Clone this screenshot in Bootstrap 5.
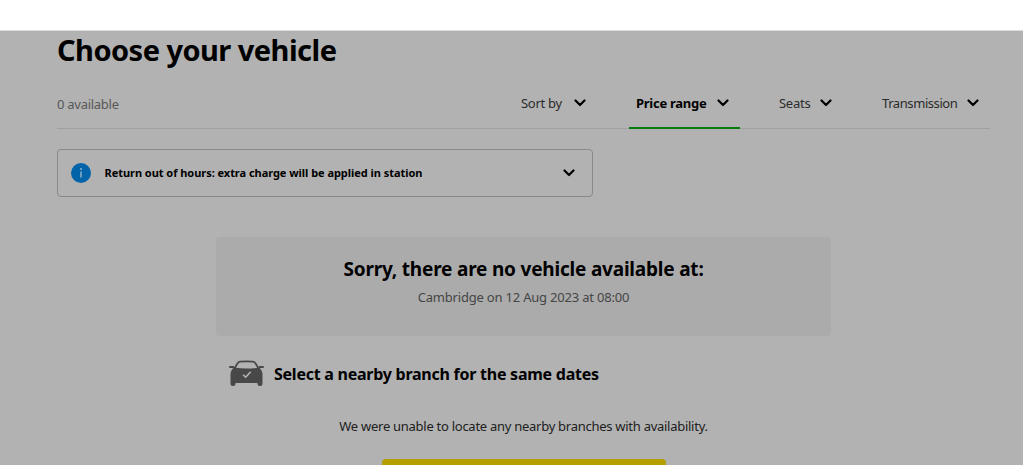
<!DOCTYPE html>
<html lang="en">
<head>
<meta charset="utf-8">
<meta name="viewport" content="width=device-width, initial-scale=1">
<title>Choose your vehicle</title>
<link href="https://cdn.jsdelivr.net/npm/bootstrap@5.3.0/dist/css/bootstrap.min.css" rel="stylesheet">
<style>
html{overflow:hidden}
body{background:#b2b2b2;color:#000;font-family:"Noto Sans","Open Sans",sans-serif;font-size:13px;line-height:20px;height:465px;overflow:hidden;letter-spacing:-.27px}
.topbar{height:31px;border-bottom:1px solid #dadcdc}
.page{margin-left:57px;width:933px;height:434px;overflow:hidden}
h1{font-size:29px;line-height:38px;letter-spacing:-.53px}
.filters{height:50px;margin-top:10px;border-bottom:1px solid #a0a0a0}
.count{color:#585858;padding-top:15px}
.filter{height:50px;color:#2b2b2b;border-bottom:2px solid transparent;padding:14px 8px 0 7px;display:flex;justify-content:space-between}
.filter svg{margin-top:6px}
.filter.active{color:#000;font-weight:700;border-color:#067a10;padding-right:11px}
.notice{width:536px;height:48px;margin-top:20px;border:1px solid #898989;border-radius:4px;padding:0 17px 0 13px;font-size:11px;font-weight:700;letter-spacing:-.04px}
.empty{width:615px;height:99px;margin:40px 0 0 159px;background:#ababab;border-radius:4px;padding-top:20px;letter-spacing:-.2px}
.empty h2{font-size:19px;line-height:25px}
.empty p{color:#454545;margin-top:5px}
.nearby{margin:24px 0 0 171px;height:28px}
.nearby h3{font-size:16px;line-height:28px;letter-spacing:-.25px}
.none{width:615px;margin:28px 0 0 159px;color:#202020}
.cta{display:block;width:284px;height:48px;margin:23px 0 0 325px;background:#b59e00;border-radius:4px}
</style>
<script src="https://cdn.jsdelivr.net/npm/bootstrap@5.3.0/dist/js/bootstrap.bundle.min.js"></script>
</head>
<body>
<svg class="d-none"><symbol id="chev" viewBox="0 0 12 8"><path d="M1.500 1.500 6 6l4.500-4.500" fill="none" stroke="#000" stroke-width="2.200" stroke-linecap="round" stroke-linejoin="round"/></symbol></svg>
<header class="topbar bg-white"></header>
<main class="page">
<h1 class="fw-bold mb-0">Choose your vehicle</h1>
<div class="filters d-flex">
<div class="count me-auto">0 available</div>
<div class="filter" style="width:80px;margin-right:35px"><span>Sort by</span><svg width="12" height="8"><use href="#chev"/></svg></div>
<div class="filter active" style="width:111px;margin-right:32px"><span>Price range</span><svg width="12" height="8"><use href="#chev"/></svg></div>
<div class="filter" style="width:68px;margin-right:35px"><span>Seats</span><svg width="12" height="8"><use href="#chev"/></svg></div>
<div class="filter" style="width:112px;margin-right:3px"><span style="letter-spacing:-.42px">Transmission</span><svg width="12" height="8"><use href="#chev"/></svg></div>
</div>
<div class="notice d-flex align-items-center">
<svg width="20" height="20" viewBox="0 0 20 20"><circle cx="10" cy="10" r="10" fill="#0464aa"/><path d="M10 8.500v6" stroke="#8fb0c8" stroke-width="1.500"/><circle cx="10" cy="6" r="1" fill="#8fb0c8"/></svg>
<span style="margin-left:13.500px">Return out of hours: extra charge will be applied in station</span>
<svg class="ms-auto" width="12" height="8"><use href="#chev"/></svg>
</div>
<section class="empty text-center"><h2 class="fw-bold mb-0">Sorry, there are no vehicle available at:</h2><p class="mb-0">Cambridge on 12 Aug 2023 at 08:00</p></section>
<div class="nearby d-flex">
<svg width="36" height="27" viewBox="0 0 36 27"><path d="M6.800 8.500Q8 5.200 9.700 3.100q1-1.200 2.500-1.400 6.300-.8 12.600 0 1.500.2 2.500 1.400 1.700 2.100 2.900 5.400" fill="none" stroke="#484848" stroke-width="1.700"/><path d="M6 7.500q12.500 2.200 25 0 3.800 3.200 3.500 7.500v8.500q0 2.500-2.500 2.500t-2.500-2.500V23h-22v.5Q7.500 26 5 26t-2.500-2.500V15Q2.200 10.700 6 7.500z" fill="#484848"/><path d="M2 7h3.200l1.600 1.500M35 7h-3.200l-1.600 1.500" fill="none" stroke="#484848" stroke-width="2" stroke-linecap="round"/><path d="m15 14.700 2.700 2.400 5-5.300" fill="none" stroke="#b2b2b2" stroke-width="1.500"/></svg>
<h3 class="fw-bold mb-0" style="margin-left:10px">Select a nearby branch for the same dates</h3></div>
<p class="none text-center mb-0">We were unable to locate any nearby branches with availability.</p>
<a class="cta" href="#" aria-label="Search again"></a>
</main>
</body>
</html>
